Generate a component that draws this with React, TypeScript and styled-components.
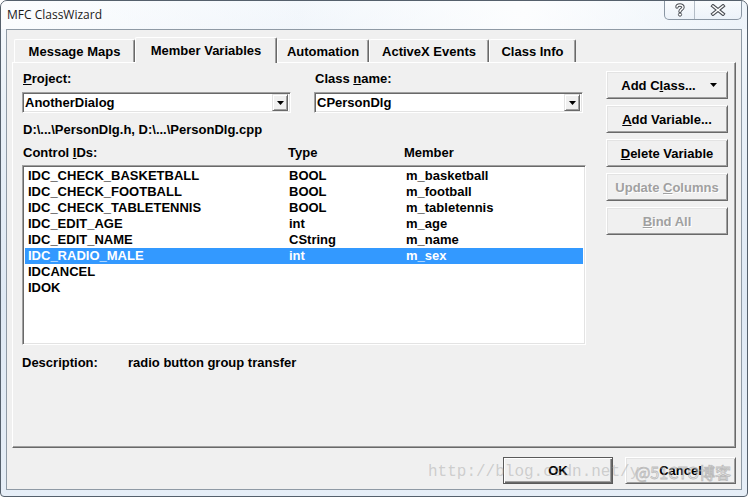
import * as React from "react";
import styled, { createGlobalStyle } from "styled-components";

const GlobalStyle = createGlobalStyle`
  html, body {
    margin: 0;
    padding: 0;
    background: #ffffff;
  }
  #root {
    width: 748px;
    height: 497px;
  }
`;

const FONT = `"Liberation Sans", Arial, sans-serif`;

interface Binding {
    id: string;
    type: string;
    member: string;
    selected?: boolean;
}

const bindings: Binding[] = [
    { id: "IDC_CHECK_BASKETBALL", type: "BOOL", member: "m_basketball" },
    { id: "IDC_CHECK_FOOTBALL", type: "BOOL", member: "m_football" },
    { id: "IDC_CHECK_TABLETENNIS", type: "BOOL", member: "m_tabletennis" },
    { id: "IDC_EDIT_AGE", type: "int", member: "m_age" },
    { id: "IDC_EDIT_NAME", type: "CString", member: "m_name" },
    { id: "IDC_RADIO_MALE", type: "int", member: "m_sex", selected: true },
    { id: "IDCANCEL", type: "", member: "" },
    { id: "IDOK", type: "", member: "" },
];

const tabs = [
    { label: "Message Maps", width: 121 },
    { label: "Member Variables", width: 142, active: true },
    { label: "Automation", width: 92 },
    { label: "ActiveX Events", width: 120 },
    { label: "Class Info", width: 87 },
];

const DownArrow: React.FC = () => (
    <svg width="7" height="4" viewBox="0 0 7 4">
        <path d="M0 0 H7 L3.5 4 Z" fill="#000" />
    </svg>
);

export default function App() {
    return (
        <>
            <GlobalStyle />
            <Window>
                <TitleBar>
                    <Title>MFC ClassWizard</Title>
                    <CaptionGroup>
                        <CaptionButton $w={29}>
                            <svg width="10" height="14" viewBox="0 0 10 14">
                                <path d="M2 4 C2 1.5 8 1.2 8 4.2 C8 6.4 5 6.4 5 8.6" fill="none" stroke="#4b4f55" strokeWidth="3.4" strokeLinecap="round" />
                                <path d="M2 4 C2 1.5 8 1.2 8 4.2 C8 6.4 5 6.4 5 8.6" fill="none" stroke="#fff" strokeWidth="1.4" strokeLinecap="round" />
                                <circle cx="5" cy="11.6" r="1.6" fill="#fff" stroke="#4b4f55" strokeWidth="1" />
                            </svg>
                        </CaptionButton>
                        <CaptionButton $w={46} $last>
                            <svg width="16" height="12" viewBox="0 0 16 12">
                                <path d="M3 2 L13 10 M13 2 L3 10" stroke="#4b4f55" strokeWidth="3.6" strokeLinecap="square" />
                                <path d="M3 2 L13 10 M13 2 L3 10" stroke="#fff" strokeWidth="1.6" strokeLinecap="square" />
                            </svg>
                        </CaptionButton>
                    </CaptionGroup>
                </TitleBar>

                <Client>
                    <TabStrip>
                        {tabs.map((t) => (
                            <Tab key={t.label} $w={t.width} $active={!!t.active}>
                                {t.label}
                            </Tab>
                        ))}
                    </TabStrip>

                    <Panel>
                        <Main>
                            <Fields>
                                <Field>
                                    <Label><u>P</u>roject:</Label>
                                    <Combo>
                                        <ComboText>AnotherDialog</ComboText>
                                        <ComboButton><DownArrow /></ComboButton>
                                    </Combo>
                                </Field>
                                <Field>
                                    <Label>Class <u>n</u>ame:</Label>
                                    <Combo>
                                        <ComboText>CPersonDlg</ComboText>
                                        <ComboButton><DownArrow /></ComboButton>
                                    </Combo>
                                </Field>
                            </Fields>

                            <PathText>D:\...\PersonDlg.h, D:\...\PersonDlg.cpp</PathText>

                            <HeaderRow>
                                <span>Control <u>I</u>Ds:</span>
                                <span>Type</span>
                                <span>Member</span>
                            </HeaderRow>

                            <ListBox>
                                {bindings.map((b) => (
                                    <Row key={b.id} $selected={!!b.selected}>
                                        <span>{b.id}</span>
                                        <span>{b.type}</span>
                                        <span>{b.member}</span>
                                    </Row>
                                ))}
                            </ListBox>

                            <DescRow>
                                <DescLabel>Description:</DescLabel>
                                <span>radio button group transfer</span>
                            </DescRow>
                        </Main>

                        <ButtonColumn>
                            <Button>
                                <span>Add C<u>l</u>ass...</span>
                                <ArrowSlot><DownArrow /></ArrowSlot>
                            </Button>
                            <Button><span><u>A</u>dd Variable...</span></Button>
                            <Button><span><u>D</u>elete Variable</span></Button>
                            <Button disabled><span>Update <u>C</u>olumns</span></Button>
                            <Button disabled><span><u>B</u>ind All</span></Button>
                        </ButtonColumn>
                    </Panel>

                    <Footer>
                        <Button $default $w={110}><span>OK</span></Button>
                        <Button $w={111}><span>Cancel</span></Button>
                    </Footer>
                </Client>

                <Watermark>
                    <WatermarkUrl>http://blog.csdn.net/y</WatermarkUrl>
                    <WatermarkBrand>@51CTO博客</WatermarkBrand>
                </Watermark>
            </Window>
        </>
    );
}

const Window = styled.div`
    position: relative;
    width: 748px;
    height: 497px;
    box-sizing: border-box;
    display: flex;
    flex-direction: column;
    border: 1px solid #55606c;
    border-radius: 7px 7px 4px 4px;
    overflow: hidden;
    background: linear-gradient(180deg, #f7fafd 0%, #eaf1f8 20%, #dfe9f4 60%, #e6eef7 100%);
    font-family: ${FONT};
`;

const TitleBar = styled.div`
    height: 28px;
    display: flex;
    align-items: flex-start;
    padding-left: 6px;
    background: linear-gradient(90deg, rgba(255, 255, 255, 0.6), rgba(232, 240, 249, 0.2) 40%, rgba(255, 255, 255, 0.7) 70%, rgba(220, 232, 244, 0.3));
`;

const Title = styled.div`
    font-family: "Open Sans", "Noto Sans", sans-serif;
    font-size: 12px;
    line-height: 28px;
    color: #1a1a1a;
    text-shadow: 0 0 6px #fff, 0 0 3px #fff;
`;

const CaptionGroup = styled.div`
    margin-left: auto;
    margin-right: 5px;
    margin-top: -1px;
    height: 19px;
    display: flex;
    border: 1px solid #8a96a3;
    border-top: none;
    border-radius: 0 0 5px 5px;
    background: linear-gradient(180deg, rgba(255, 255, 255, 0.55), rgba(233, 240, 248, 0.55));
`;

const CaptionButton = styled.div<{ $w: number; $last?: boolean }>`
    width: ${(p) => p.$w}px;
    display: flex;
    align-items: center;
    justify-content: center;
    border-right: ${(p) => (p.$last ? "none" : "1px solid #b3bcc6")};
`;

const Client = styled.div`
    flex: 1;
    margin: 0 5px 6px 5px;
    display: flex;
    flex-direction: column;
    padding: 7px 5px 5px 5px;
    background: #f0f0f0;
    border: 1px solid #8f9aa5;
`;

const TabStrip = styled.div`
    height: 25px;
    display: flex;
    align-items: flex-end;
    padding-left: 2px;
`;

const Tab = styled.div<{ $w: number; $active: boolean }>`
    position: relative;
    z-index: ${(p) => (p.$active ? 2 : 0)};
    box-sizing: border-box;
    width: ${(p) => p.$w}px;
    height: ${(p) => (p.$active ? 26 : 23)}px;
    margin-bottom: ${(p) => (p.$active ? -1 : 0)}px;
    display: flex;
    align-items: center;
    justify-content: center;
    padding-bottom: ${(p) => (p.$active ? 1 : 0)}px;
    background: #f0f0f0;
    border-top: 1px solid #ffffff;
    border-left: 1px solid #ffffff;
    border-right: 1px solid #696969;
    box-shadow: inset -1px 0 #a0a0a0;
    border-radius: 2px 2px 0 0;
    font-size: 13px;
    font-weight: bold;
    color: #000;
    white-space: nowrap;
`;

const Panel = styled.div`
    flex: 1;
    display: grid;
    grid-template-columns: 564px 122px;
    column-gap: 20px;
    align-items: start;
    padding: 8px 8px 0 9px;
    border: 1px solid;
    border-color: #ffffff #696969 #696969 #ffffff;
    box-shadow: inset -1px -1px #a0a0a0;
    font-size: 13px;
    font-weight: bold;
    line-height: 16px;
    color: #000;
`;

const Main = styled.div`
    display: flex;
    flex-direction: column;
`;

const Fields = styled.div`
    display: grid;
    grid-template-columns: 269px 269px;
    column-gap: 23px;
`;

const Field = styled.div`
    display: flex;
    flex-direction: column;
`;

const Label = styled.div`
    padding-left: 1px;
    height: 16px;
`;

const sunken = `
    box-sizing: border-box;
    border: 1px solid;
    border-color: #a0a0a0 #ffffff #ffffff #a0a0a0;
    box-shadow: inset 1px 1px #696969, inset -1px -1px #e3e3e3;
    background: #ffffff;
`;

const Combo = styled.div`
    ${sunken}
    margin-top: 5px;
    height: 21px;
    display: flex;
    align-items: center;
    padding: 2px;
`;

const ComboText = styled.div`
    flex: 1;
`;

const ComboButton = styled.div`
    box-sizing: border-box;
    width: 16px;
    height: 17px;
    display: flex;
    align-items: center;
    justify-content: center;
    background: #f0f0f0;
    border: 1px solid;
    border-color: #e3e3e3 #696969 #696969 #e3e3e3;
    box-shadow: inset 1px 1px #fff, inset -1px -1px #a0a0a0;
`;

const PathText = styled.div`
    margin-top: 9px;
    padding-left: 1px;
`;

const HeaderRow = styled.div`
    margin-top: 7px;
    padding-left: 1px;
    display: grid;
    grid-template-columns: 265px 116px 1fr;
`;

const ListBox = styled.div`
    ${sunken}
    margin-top: 4px;
    height: 180px;
    padding: 2px;
`;

const Row = styled.div<{ $selected: boolean }>`
    height: 16px;
    padding-left: 3px;
    display: grid;
    grid-template-columns: 261px 117px 1fr;
    background: ${(p) => (p.$selected ? "#3399ff" : "transparent")};
    color: ${(p) => (p.$selected ? "#ffffff" : "#000000")};
`;

const DescRow = styled.div`
    margin-top: 10px;
    display: flex;
`;

const DescLabel = styled.span`
    width: 106px;
`;

const ButtonColumn = styled.div`
    display: flex;
    flex-direction: column;
    gap: 6px;
`;

const Button = styled.button<{ $default?: boolean; $w?: number }>`
    position: relative;
    box-sizing: border-box;
    width: ${(p) => (p.$w ? `${p.$w}px` : "100%")};
    height: 28px;
    display: flex;
    align-items: center;
    justify-content: center;
    padding: 0;
    background: #f0f0f0;
    font-family: ${FONT};
    font-size: 13px;
    font-weight: bold;
    color: #000;
    white-space: pre;
    border: 1px solid;
    border-color: ${(p) => (p.$default ? "#5a5a5a" : "#ffffff #696969 #696969 #ffffff")};
    box-shadow: ${(p) =>
        p.$default
            ? "inset 1px 1px #ffffff, inset -1px -1px #696969, inset -2px -2px #a0a0a0"
            : "inset 1px 1px #e3e3e3, inset -1px -1px #a0a0a0"};

    &:disabled {
        color: #a0a0a0;
        text-shadow: 1px 1px 0 #ffffff;
    }
`;

const ArrowSlot = styled.span`
    display: inline-flex;
    margin-left: 14px;
    margin-right: -4px;
`;

const Footer = styled.div`
    margin-top: 9px;
    display: flex;
    justify-content: flex-end;
    gap: 12px;
    height: 27px;

    & > button {
        height: 27px;
    }
`;

const Watermark = styled.div`
    position: absolute;
    left: 427px;
    top: 459px;
    display: flex;
    align-items: center;
    pointer-events: none;
    white-space: nowrap;
`;

const WatermarkUrl = styled.span`
    font-family: "Liberation Mono", "DejaVu Sans Mono", monospace;
    font-size: 16px;
    color: rgba(150, 150, 150, 0.4);
`;

const WatermarkBrand = styled.span`
    margin-left: -4px;
    font-family: "Noto Sans CJK SC", "Noto Sans", sans-serif;
    font-size: 16px;
    color: rgba(255, 255, 255, 0.35);
    -webkit-text-stroke: 0.8px rgba(140, 140, 140, 0.55);
`;
